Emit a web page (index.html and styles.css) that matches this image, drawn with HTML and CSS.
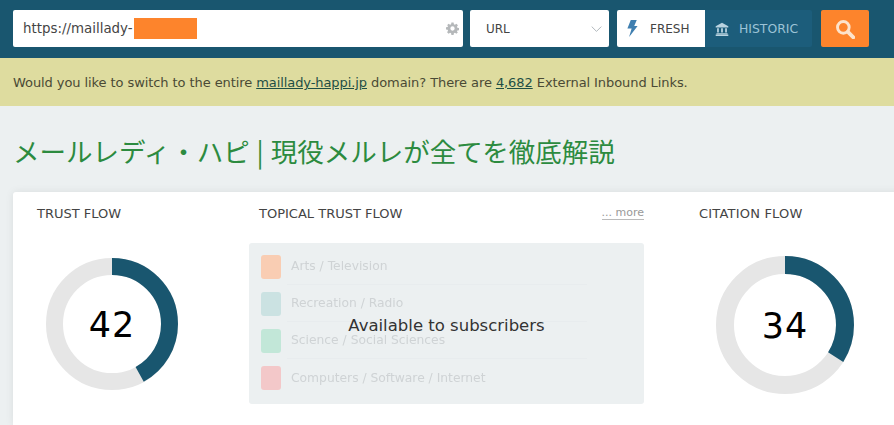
FILE: index.html
```html
<!DOCTYPE html>
<html lang="en">
<head>
    <meta charset="UTF-8">
    <meta name="viewport" content="width=device-width, initial-scale=1.0">
    <title>Site Explorer</title>
    <link rel="stylesheet" href="styles.css">
</head>
<body>
    <header class="search-bar">
        <div class="url-field">
            <span class="url-text">https://maillady-</span>
            <span class="redacted"></span>
            <svg class="gear" viewBox="0 0 24 24" width="13" height="13">
                <path fill-rule="evenodd" d="M10 1h4l.6 3.2 1.900.8L19.200 3.200 22 6l-1.800 2.700.8 1.900 3 .6v4l-3 .6-.8 1.900L22 19l-2.800 2.800-2.700-1.800-1.900.8-.6 3.200h-4l-.6-3.200-1.900-.8L4.800 21.800 2 19l1.800-2.800-.8-1.900-3-.6v-4l3-.6.8-1.900L2 6l2.800-2.800L7.500 5l1.900-.8zM12 8a4 4 0 1 0 0 8 4 4 0 0 0 0-8z"/>
            </svg>
        </div>
        <div class="select-field">
            <span>URL</span>
            <svg class="chevron" viewBox="0 0 18 10" width="11" height="6">
                <path d="M1 1l8 8 8-8" fill="none" stroke="#a9b0b5" stroke-width="1.500"/>
            </svg>
        </div>
        <div class="mode-toggle">
            <div class="mode mode-active">
                <svg viewBox="0 0 12 20" width="11" height="17">
                    <path fill="#3f7fb0" d="M4 0h7L8 7h4L2 20l3-10H0z"/>
                </svg>
                <span>FRESH</span>
            </div>
            <div class="mode">
                <svg viewBox="0 0 20 20" width="14" height="14">
                    <path fill="#b9d3e0" d="M10 1l9 5v2H1V6zM3 9h2.500v6H3zM8.700 9h2.600v6H8.700zM14.500 9H17v6h-2.500zM2 16h16v1.500H2zM1 18h18v2H1z"/>
                </svg>
                <span>HISTORIC</span>
            </div>
        </div>
        <button class="search-btn">
            <svg viewBox="0 0 24 24" width="20" height="20">
                <circle cx="10" cy="10" r="7" fill="none" stroke="#fde3cb" stroke-width="3.500"/>
                <path d="M15.500 15.500L22 22" stroke="#fde3cb" stroke-width="4.500" stroke-linecap="round"/>
            </svg>
        </button>
    </header>

    <div class="notice">
        Would you like to switch to the entire <a href="#">maillady-happi.jp</a> domain? There are <a href="#">4,682</a> External Inbound Links.
    </div>

    <main class="content">
        <h1 class="site-title">メールレディ・ハピ | 現役メルレが全てを徹底解説</h1>

        <section class="card">
            <div class="flow flow-trust">
                <h3>TRUST FLOW</h3>
                <svg class="donut" viewBox="0 0 132 132" width="132" height="132">
                    <circle class="donut-track" cx="66" cy="66" r="57.500" stroke-width="17"/>
                    <circle class="donut-value" cx="66" cy="66" r="57.500" stroke-width="17" pathLength="100" stroke-dasharray="42 100" transform="rotate(-90 66 66)"/>
                    <text x="66" y="79">42</text>
                </svg>
            </div>

            <div class="topical">
                <div class="topical-head">
                    <h3>TOPICAL TRUST FLOW</h3>
                    <a class="more" href="#">... more</a>
                </div>
                <div class="topical-box">
                    <ul class="topic-list">
                        <li><span class="swatch swatch-arts"></span><span class="topic-name">Arts / Television</span></li>
                        <li><span class="swatch swatch-recreation"></span><span class="topic-name">Recreation / Radio</span></li>
                        <li><span class="swatch swatch-science"></span><span class="topic-name">Science / Social Sciences</span></li>
                        <li><span class="swatch swatch-computers"></span><span class="topic-name">Computers / Software / Internet</span></li>
                    </ul>
                    <div class="locked">Available to subscribers</div>
                </div>
            </div>

            <div class="flow flow-citation">
                <h3>CITATION FLOW</h3>
                <svg class="donut" viewBox="0 0 138 138" width="138" height="138">
                    <circle class="donut-track" cx="69" cy="69" r="60" stroke-width="18"/>
                    <circle class="donut-value" cx="69" cy="69" r="60" stroke-width="18" pathLength="100" stroke-dasharray="34 100" transform="rotate(-90 69 69)"/>
                    <text x="69" y="82">34</text>
                </svg>
            </div>
        </section>
    </main>
</body>
</html>
```

FILE: styles.css
```css
:root {
    --navy: #19566f;
    --navy-light: #1c5d7b;
    --orange: #fd842c;
    --text: #444;
}

* {
    margin: 0;
    padding: 0;
    box-sizing: border-box;
}

html, body {
    height: 100%;
    overflow: hidden;
}

body {
    font-family: "DejaVu Sans", Verdana, sans-serif;
    font-size: 13px;
    background-color: #ecf0f1;
    color: var(--text);
}

.search-bar {
    display: flex;
    align-items: center;
    height: 58px;
    padding: 10px 0 11px 13px;
    background-color: var(--navy);
}

.url-field {
    display: flex;
    align-items: center;
    width: 450px;
    height: 37px;
    padding: 0 4px 0 10px;
    background-color: #fff;
    border-radius: 2px;
}

.url-text {
    font-size: 13.400px;
}

.redacted {
    width: 63px;
    height: 21px;
    margin-left: 1px;
    background-color: var(--orange);
}

.gear {
    margin-left: auto;
    fill: #b5b8ba;
}

.select-field {
    display: flex;
    align-items: center;
    justify-content: space-between;
    width: 139px;
    height: 37px;
    margin-left: 7px;
    padding: 0 7px 0 16px;
    font-size: 12px;
    background-color: #fff;
    border-radius: 2px;
}

.mode-toggle {
    display: flex;
    margin-left: 8px;
}

.mode {
    display: flex;
    align-items: center;
    gap: 10px;
    height: 37px;
    width: 107px;
    padding-left: 10px;
    font-size: 12.400px;
    color: #9cc3d6;
    background-color: var(--navy-light);
    border-radius: 0 2px 2px 0;
}

.mode-active {
    width: 88px;
    gap: 12px;
    font-size: 12px;
    color: var(--text);
    background-color: #fff;
    border-radius: 2px 0 0 2px;
}

.search-btn {
    display: flex;
    align-items: center;
    justify-content: center;
    width: 48px;
    height: 37px;
    margin-left: 9px;
    border: none;
    border-radius: 2px;
    background-color: var(--orange);
}

.notice {
    height: 48px;
    padding: 16px 13px 0;
    line-height: 17px;
    letter-spacing: -0.08px;
    color: #4a4a35;
    background-color: #dedc9f;
}

.notice a {
    color: #1f4f45;
}

.content {
    padding: 0 0 0 13px;
}

.site-title {
    margin-top: 26px;
    font-family: "Noto Sans CJK JP", "DejaVu Sans", sans-serif;
    font-size: 26.500px;
    font-weight: 400;
    word-spacing: 1px;
    line-height: 37px;
    color: #2c8b3f;
}

.card {
    display: flex;
    width: 900px;
    height: 233px;
    margin-top: 23px;
    background-color: #fff;
    border-radius: 3px 0 0 0;
    box-shadow: 0 0 8px rgba(0, 0, 0, 0.08);
}

h3 {
    font-size: 13px;
    font-weight: 400;
    line-height: 15px;
}

.flow h3 {
    margin-bottom: 37px;
}

.flow-trust {
    width: 236px;
    padding: 14px 0 0 24px;
}

.flow-trust .donut {
    margin: 0 0 0 9px;
}

.flow-citation {
    margin-left: 55px;
    padding-top: 14px;
}

.flow-citation h3 {
    margin-bottom: 35px;
    letter-spacing: 0.2px;
}

.flow-citation .donut {
    margin-left: 17px;
}

.donut {
    display: block;
}

.donut circle {
    fill: none;
}

.donut-track {
    stroke: #e6e6e6;
}

.donut-value {
    stroke: var(--navy);
}

.donut text {
    font-size: 35px;
    letter-spacing: 1px;
    text-anchor: middle;
    fill: #000;
}

.topical {
    width: 395px;
    padding-top: 14px;
}

.topical-head {
    display: flex;
    justify-content: space-between;
    padding-left: 10px;
}

.more {
    font-size: 11px;
    color: #999;
    text-decoration: none;
    border-bottom: 1px solid #bbb;
    height: 14px;
    line-height: 13px;
}

.topical-box {
    position: relative;
    height: 161px;
    margin-top: 22px;
    background-color: #ecf0f1;
    border-radius: 3px;
}

.topic-list {
    list-style: none;
    padding: 5px 0 0 12px;
}

.topic-list li {
    display: flex;
    align-items: center;
    gap: 6px;
    width: 326px;
    height: 37px;
    font-size: 12.300px;
    color: #cfd3d5;
}

.topic-name {
    display: flex;
    align-items: center;
    flex: 1;
    height: 100%;
    padding-left: 4px;
    filter: blur(0.4px);
    border-bottom: 1px solid #e8ecee;
}

.topic-list li:last-child .topic-name {
    border-bottom: none;
}

.swatch {
    width: 20px;
    height: 24px;
    border-radius: 3px;
}

.swatch-arts {
    background-color: #f9cdb3;
}

.swatch-recreation {
    background-color: #cbe2e2;
}

.swatch-science {
    background-color: #c2e7d8;
}

.swatch-computers {
    background-color: #f3c8c9;
}

.locked {
    position: absolute;
    top: 73px;
    left: 0;
    right: 0;
    font-size: 16.500px;
    line-height: 20px;
    text-align: center;
    color: #333;
}
```
